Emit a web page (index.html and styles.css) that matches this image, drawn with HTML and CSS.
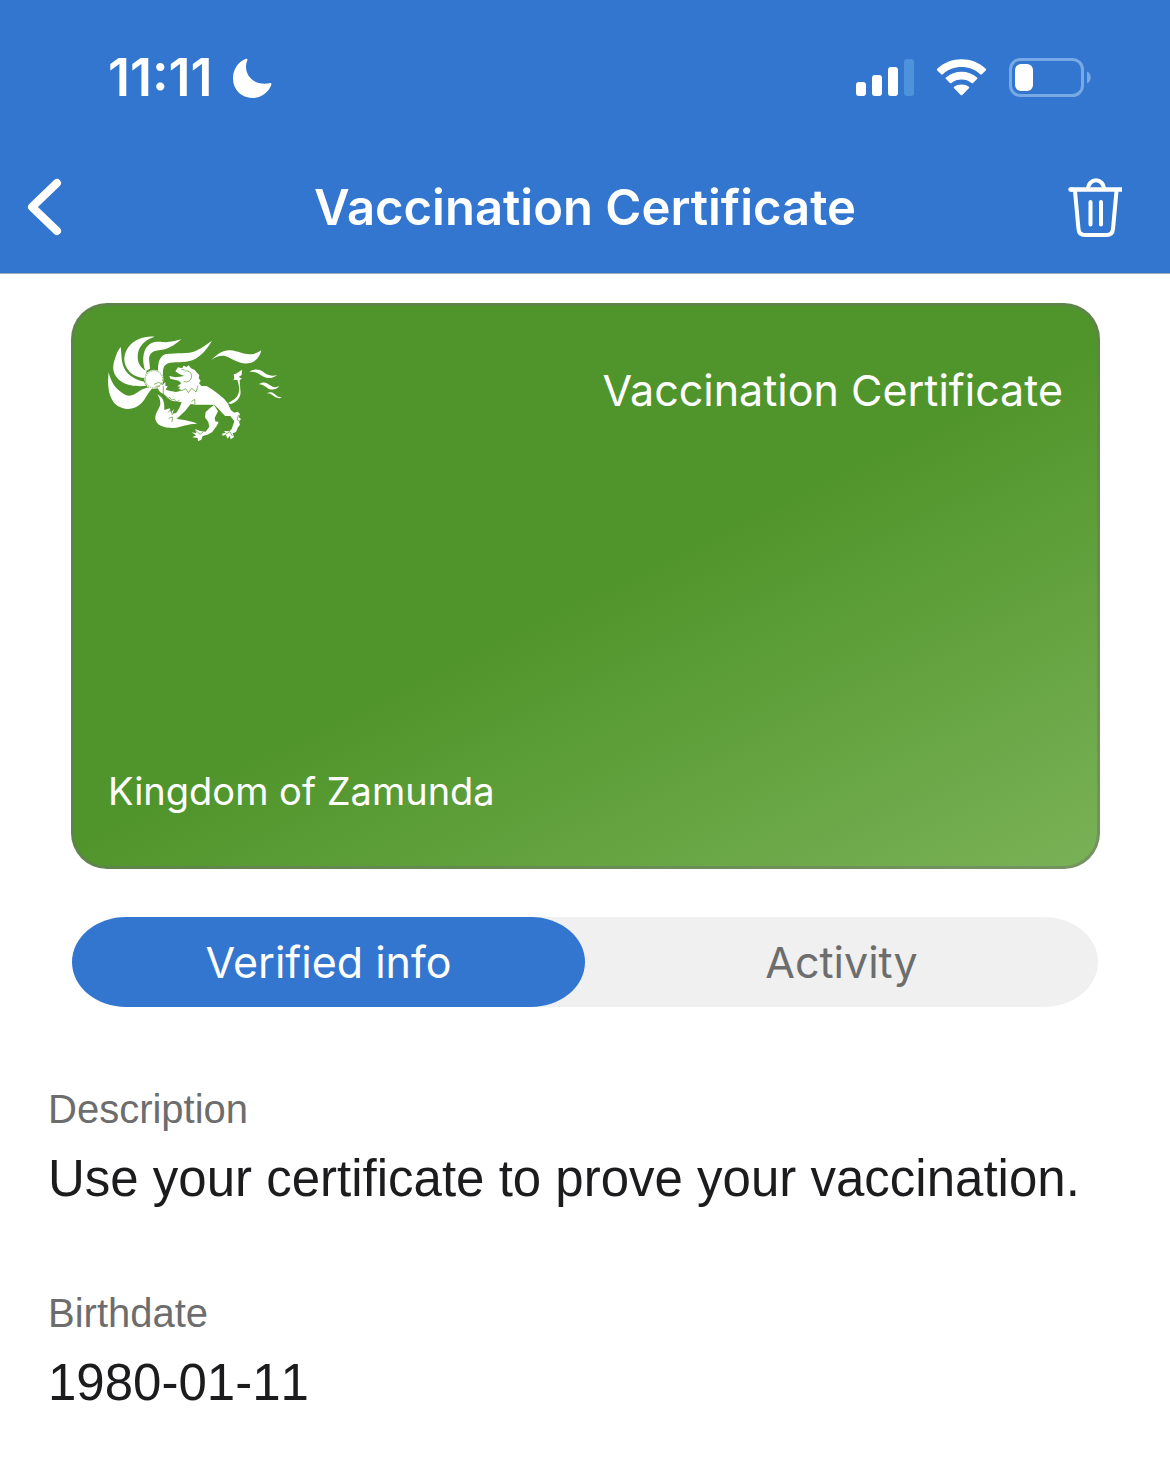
FILE: index.html
```html
<!DOCTYPE html>
<html lang="en">
<head>
  <meta charset="utf-8">
  <meta name="viewport" content="width=device-width, initial-scale=1">
  <title>Vaccination Certificate</title>
  <link rel="stylesheet" href="styles.css">
</head>
<body>
  <header class="top">
    <div class="status">
      <div class="status-left">
        <span class="clock">11:11</span>
        <svg class="moon" width="40" height="40" viewBox="0 0 40 40" aria-hidden="true">
          <path fill="#fff" d="M13.500 1C15 .4 16 1 15.200 2.600C10.500 14.500 20 28.500 37.500 25.200C39.300 24.800 39.800 25.800 39.200 27.200C36 34.800 29 40 20.500 40C9.500 40 1 31.500 1 20.500C1 11.500 6 4 13.500 1Z"/>
        </svg>
      </div>
      <div class="status-right">
        <svg width="58" height="40" viewBox="0 0 58 40" aria-hidden="true">
          <g fill="#fff">
            <rect x="0" y="24" width="10" height="14" rx="3"/>
            <rect x="16" y="17" width="10" height="21" rx="3"/>
            <rect x="32" y="9" width="10" height="29" rx="3"/>
          </g>
          <rect x="48" y="1" width="10" height="37" rx="3" fill="#4f92dc"/>
        </svg>
        <svg width="51" height="40" viewBox="0 0 52 40" aria-hidden="true">
          <g fill="#fff">
            <path d="M1.300 12.300C.7 11.700.7 11 1.300 10.500C15-2.400 37-2.400 50.700 10.500C51.300 11 51.300 11.700 50.700 12.300L46.700 16.200C46.200 16.700 45.700 16.700 45.100 16.200C34.500 6.300 17.500 6.300 6.900 16.200C6.300 16.700 5.800 16.700 5.300 16.200Z"/>
            <path d="M10.200 21.100C9.600 20.500 9.600 19.900 10.200 19.400C19 11.800 33 11.800 41.800 19.400C42.400 19.900 42.400 20.500 41.800 21.100L37.800 25C37.300 25.500 36.700 25.500 36.200 25C30.500 20.300 21.500 20.300 15.800 25C15.300 25.500 14.700 25.500 14.200 25Z"/>
            <path d="M18.500 30.500C18 30 18 29.400 18.600 29C22.500 26 29.500 26 33.400 29C34 29.400 34 30 33.500 30.500L26.800 37.300C26.300 37.800 25.700 37.800 25.200 37.300Z"/>
          </g>
        </svg>
        <svg width="82" height="40" viewBox="0 0 82 40" aria-hidden="true">
          <rect x="1.500" y="1.500" width="72" height="36" rx="10" fill="none" stroke="#77a9e4" stroke-width="3"/>
          <rect x="6" y="6" width="18" height="27" rx="6" fill="#fff"/>
          <path fill="#77a9e4" d="M78 13.500C83 15.500 83 23.500 78 25.500Z"/>
        </svg>
      </div>
    </div>
    <nav class="bar">
      <button class="icon-button" type="button" aria-label="Back">
        <svg width="36" height="60" viewBox="0 0 36 60" aria-hidden="true">
          <path d="M31 6L6 30L31 54" fill="none" stroke="#fff" stroke-width="8" stroke-linecap="round" stroke-linejoin="round"/>
        </svg>
      </button>
      <h1 class="title">Vaccination Certificate</h1>
      <button class="icon-button icon-button-end" type="button" aria-label="Delete">
        <svg width="54" height="60" viewBox="0 0 54 60" aria-hidden="true">
          <g fill="none" stroke="#fff" stroke-width="4">
            <path d="M2.500 12.500H54" stroke-width="4.500"/>
            <path d="M2.500 12.500H4" stroke-linecap="round" stroke-width="4.500"/>
            <path d="M20 13C20 0 36 0 36 13"/>
            <path d="M7 14L10.500 52Q11 58 17 58H38.500Q44.500 58 45 52L48.500 14"/>
            <path d="M22.500 25V47.500M33 25V47.500" stroke-linecap="round"/>
          </g>
        </svg>
      </button>
    </nav>
  </header>

  <main>
    <section class="card">
      <div class="card-head">
        <svg class="crest" width="174" height="106" viewBox="38 32 522 318" role="img" aria-label="Kingdom of Zamunda crest">
          <g fill="#fff">
            <path d="M40 141C48 176 63 190 82 204C97 216 112 211 128 200C142 190 155 185 172 187C158 201 151 220 138 234C113 259 77 254 56 232C36 206 37 170 40 141Z"/>
            <path d="M76 65C80 92 76 113 91 136C105 155 126 164 146 169L152 182C126 183 101 183 80 170C49 149 50 124 60 97C64 84 69 74 76 65Z"/>
            <path d="M178 34C145 45 126 65 127 97C128 117 140 130 154 138L148 158C126 157 108 149 97 132C80 108 87 84 99 66C116 42 149 31 178 34Z"/>
            <path d="M258 42C233 63 216 73 191 75C174 76 163 84 161 99L164 130L151 138C142 118 141 91 150 72C161 52 180 48 200 50C221 52 239 47 258 42Z"/>
            <path d="M350 46C332 77 310 101 280 108C256 114 225 107 211 118C201 126 204 140 202 152L188 136C188 112 192 91 213 86C244 81 278 88 302 76C320 68 336 56 350 46Z"/>
            <circle cx="176" cy="162" r="29"/>
            <path d="M186 207C203 216 208 229 207 254L223 249L234 280C257 282 285 285 306 295C280 294 260 305 234 308C203 308 184 300 180 281C178 263 194 249 195 235C195 222 191 216 186 207Z"/>
            <path d="M348 104C368 84 385 73 405 75C428 77 447 88 465 87C480 87 488 80 498 75C493 96 480 112 457 114C431 118 411 98 388 92C373 90 359 96 348 104Z"/>
            <path d="M462 140C478 128 493 132 507 142C523 153 533 152 546 149C532 160 516 161 502 153C487 143 478 137 462 140Z"/>
            <path d="M490 177C504 167 513 171 524 180C536 188 543 186 552 182C544 193 531 195 519 190C509 184 503 177 490 177Z"/>
            <path d="M514 204C528 197 535 202 542 210C549 216 554 216 560 217C547 221 540 216 532 210C526 205 522 203 514 204Z"/>
            <path d="M240 138L248 126L260 129L265 121L274 125L280 120L287 129L297 133L305 142L312 150L310 158L316 166L311 174L318 182L334 182L353 194L370 207L386 220L397 234L407 255L417 262L427 259L434 266L430 275L437 281L431 289L434 298L428 306L422 320L412 324L416 335L406 342L403 331L397 340L391 328L382 331L380 325L391 322L386 317L402 318L409 311L417 288L405 272L389 272L375 257L357 238L368 258L358 278L360 288L370 290L364 302L350 321L336 328L322 332L318 343L308 348L307 338L291 336L302 330L289 321L303 324L300 311L314 317L331 319L342 304L339 290L329 276L331 260L344 248L356 239L337 238L301 238L286 236L270 256L247 278L236 288L226 296L222 286L207 292L213 280L201 270L216 270L216 256L226 263L236 251L231 266L243 262L252 248L259 231L247 229L229 226L215 217L208 208L194 200L188 190L178 181L191 184L190 172L203 178L210 169L210 181L217 183L211 193L225 197L242 200L258 196L249 190L255 184L246 183L258 174L250 166L225 160L222 152L240 156L253 154L267 152L252 146Z"/>
            <path d="M440 133L422 145L415 147L417 158L414 163L426 164C435 189 434 208 417 222L398 234L407 236C427 229 439 213 435 194L433 164L440 160L430 155L439 149Z"/>
          </g>
          <g fill="none" stroke="#50952b" stroke-width="2">
            <circle cx="176" cy="162" r="26" stroke-dasharray="5 2"/>
            <path d="M268 137Q286 135 289 150Q290 166 274 170L265 168M259 132L268 134M250 190L260 196L271 190L279 202L289 189L302 200L308 181M176 177L190 171L202 177M181 183L194 182M205 153L207 171M204 181V215M288 229L298 222L299 237M217 262L225 254L232 269M220 279L232 275L230 290M302 316L314 327L324 320M390 327L404 319L411 332M356 238L369 256"/>
            <path d="M210 211L218 219L224 216L228 224L237 222L244 230L253 224M365 247L374 258L373 268L386 270M430 268L425 282L433 288"/>
          </g>
        </svg>
        <h2 class="card-title">Vaccination Certificate</h2>
      </div>
      <p class="issuer">Kingdom of Zamunda</p>
    </section>

    <div class="tabs" role="tablist">
      <button class="tab tab-active" type="button" role="tab" aria-selected="true">Verified info</button>
      <button class="tab" type="button" role="tab" aria-selected="false">Activity</button>
    </div>

    <dl class="details">
      <div class="detail">
        <dt>Description</dt>
        <dd>Use your certificate to prove your vaccination.</dd>
      </div>
      <div class="detail">
        <dt>Birthdate</dt>
        <dd>1980-01-11</dd>
      </div>
    </dl>
  </main>
</body>
</html>
```
FILE: styles.css
```css
* {
  box-sizing: border-box;
}

body {
  margin: 0;
  background: #fff;
  color: #1c1c1e;
  font-family: Inter, sans-serif;
}

h1,
h2,
p,
dl,
dd {
  margin: 0;
}

button {
  border: 0;
  padding: 0;
  background: none;
  font: inherit;
  color: inherit;
}

svg {
  display: block;
}

.top {
  background: #3376cf;
  color: #fff;
  border-bottom: 1px solid #a5acb8;
}

.status {
  display: flex;
  align-items: center;
  justify-content: space-between;
  height: 142px;
  padding: 14px 79px 0 108px;
}

.status-left {
  display: flex;
  align-items: center;
  gap: 14px;
}

.clock {
  min-width: 110px;
  font-size: 52px;
  line-height: 60px;
  font-weight: 600;
}

.status-right {
  display: flex;
  align-items: center;
  gap: 22px;
}

.bar {
  display: grid;
  grid-template-columns: 96px 1fr 96px;
  align-items: center;
  height: 131px;
}

.icon-button {
  padding: 0 0 2px 26px;
  justify-self: start;
}

.icon-button-end {
  padding: 0 48px 2px 0;
  justify-self: end;
}

.title {
  font-size: 49px;
  line-height: 60px;
  font-weight: 600;
  text-align: center;
}

.card {
  display: flex;
  flex-direction: column;
  justify-content: space-between;
  min-height: 566px;
  margin: 29px 70px 0 71px;
  padding: 30px 34px 51px;
  border: 3px solid rgba(110, 110, 110, 0.45);
  border-radius: 36px;
  background: linear-gradient(154deg, #50952b 51%, #7ab257) border-box;
  color: #fff;
}

.card-head {
  display: flex;
  align-items: flex-start;
  justify-content: space-between;
}

.crest {
  overflow: visible;
}

.card-title {
  padding-top: 26px;
  font-size: 43px;
  line-height: 56px;
  font-weight: 400;
}

.issuer {
  font-size: 38px;
  line-height: 48px;
}

.tabs {
  display: flex;
  margin: 48px 72px 0;
  border-radius: 54px / 45px;
  background: #f0f0f0;
}

.tab {
  flex: 1;
  height: 90px;
  border-radius: 54px / 45px;
  color: #6d6d6d;
  font-size: 43px;
}

.tab-active {
  background: #3376cf;
  color: #fff;
}

.details {
  display: grid;
  gap: 80px;
  padding: 78px 48px 48px;
  font-family: "Liberation Sans", Arial, sans-serif;
  font-kerning: none;
}

.detail dt {
  color: #6d6d6d;
  font-size: 40px;
  line-height: 48px;
}

.detail dd {
  margin-top: 16px;
  font-size: 51px;
  line-height: 60px;
}
```
